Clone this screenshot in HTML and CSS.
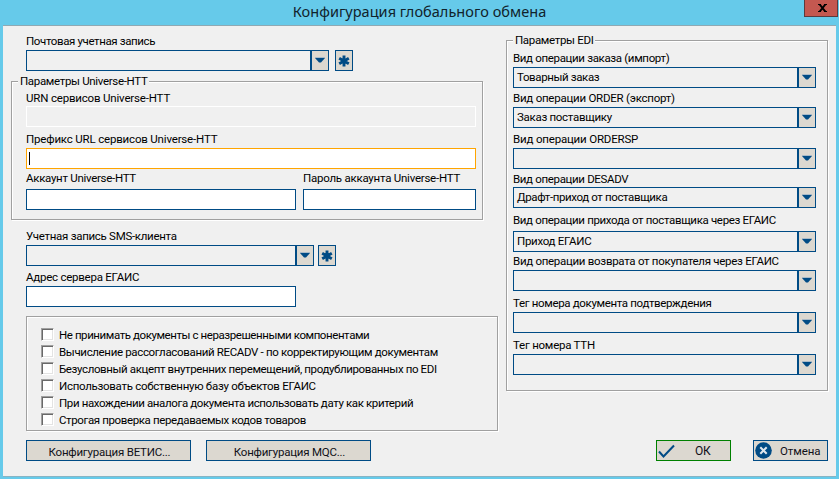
FILE: index.html
```html
<!DOCTYPE html>
<html lang="ru">
<head>
<meta charset="utf-8">
<title>Конфигурация глобального обмена</title>
<link rel="stylesheet" href="styles.css">
</head>
<body>
<svg class="defs" aria-hidden="true">
  <symbol id="arrow" viewBox="0 0 10 6"><path d="M0 .5h10" stroke="#a9bac8"/><path d="M0 1h10L6 5.500H4z" fill="#004b85"/></symbol>
  <symbol id="star" viewBox="0 0 12 12"><path d="M6 .5v11M1.2 3.2l9.6 5.6M10.8 3.2L1.2 8.8" stroke="#004b85" stroke-width="2.9"/></symbol>
</svg>
<div class="window">
  <header class="titlebar">
    <h1>Конфигурация глобального обмена</h1>
    <button class="close"><svg width="9" height="8" viewBox="0 0 9 8"><path d="M0 .5h3M6 .5h3M0 7.500h3M6 7.500h3" stroke="#000"/><path d="M1.700 .5l5.600 7M7.300 .5l-5.600 7" stroke="#000" stroke-width="2"/></svg></button>
  </header>
  <main class="client">
    <section class="left">
      <div class="field mail">
        <label class="t5">Почтовая учетная запись</label>
        <div class="row"><div class="combo"><span></span><b><svg><use href="#arrow"/></svg></b></div><button class="star"><svg><use href="#star"/></svg></button></div>
      </div>
      <div class="group htt">
        <span class="legend">Параметры Universe-HTT</span>
        <div class="field"><label class="t1">URN сервисов Universe-HTT</label><div class="input disabled"></div></div>
        <div class="field prefix"><label class="t1">Префикс URL сервисов Universe-HTT</label><div class="input focus"><i></i></div></div>
        <div class="row creds">
          <div class="field account"><label class="t3">Аккаунт Universe-HTT</label><div class="input"></div></div>
          <div class="field password"><label class="t2">Пароль аккаунта Universe-HTT</label><div class="input"></div></div>
        </div>
      </div>
      <div class="field sms">
        <label class="t3">Учетная запись SMS-клиента</label>
        <div class="row"><div class="combo"><span></span><b><svg><use href="#arrow"/></svg></b></div><button class="star"><svg><use href="#star"/></svg></button></div>
      </div>
      <div class="field server"><label class="t2">Адрес сервера ЕГАИС</label><div class="input"></div></div>
      <div class="group checks">
        <label class="t6"><i></i>Не принимать документы с неразрешенными компонентами</label>
        <label class="t4"><i></i>Вычисление рассогласований RECADV - по корректирующим документам</label>
        <label class="t5"><i></i>Безусловный акцепт внутренних перемещений, продублированных по EDI</label>
        <label class="t3"><i></i>Использовать собственную базу объектов ЕГАИС</label>
        <label class="t5"><i></i>При нахождении аналога документа использовать дату как критерий</label>
        <label class="t5"><i></i>Строгая проверка передаваемых кодов товаров</label>
      </div>
      <div class="row config"><button class="btn wide">Конфигурация ВЕТИС...</button><button class="btn wide">Конфигурация MQC...</button></div>
    </section>
    <section class="right">
      <div class="group edi">
        <span class="legend">Параметры EDI</span>
        <div class="field"><label class="t4">Вид операции заказа (импорт)</label><div class="combo"><span class="t5">Товарный заказ</span><b><svg><use href="#arrow"/></svg></b></div></div>
        <div class="field g3"><label class="t2">Вид операции ORDER (экспорт)</label><div class="combo"><span class="t3">Заказ поставщику</span><b><svg><use href="#arrow"/></svg></b></div></div>
        <div class="field g4"><label class="t1">Вид операции ORDERSP</label><div class="combo"><span></span><b><svg><use href="#arrow"/></svg></b></div></div>
        <div class="field g3 tight"><label class="t4">Вид операции DESADV</label><div class="combo"><span class="t5">Драфт-приход от поставщика</span><b><svg><use href="#arrow"/></svg></b></div></div>
        <div class="field g5 loose"><label class="t4">Вид операции прихода от поставщика через ЕГАИС</label><div class="combo"><span class="t3">Приход ЕГАИС</span><b><svg><use href="#arrow"/></svg></b></div></div>
        <div class="field g2"><label class="t3">Вид операции возврата от покупателя через ЕГАИС</label><div class="combo"><span></span><b><svg><use href="#arrow"/></svg></b></div></div>
        <div class="field g5"><label class="t4">Тег номера документа подтверждения</label><div class="combo"><span></span><b><svg><use href="#arrow"/></svg></b></div></div>
        <div class="field g5"><label class="t2">Тег номера ТТН</label><div class="combo"><span></span><b><svg><use href="#arrow"/></svg></b></div></div>
      </div>
      <div class="row actions">
        <button class="btn ok"><svg width="17" height="14" viewBox="0 0 17 14"><path d="M1 7.500l4.500 5L16 1.500" fill="none" stroke="#004b85" stroke-width="2"/></svg><span>ОК</span></button>
        <button class="btn cancel"><svg width="17" height="17" viewBox="0 0 17 17"><circle cx="8.500" cy="8.500" r="8.300" fill="#004b85"/><path d="M5.300 5.300l6.400 6.400m0-6.400l-6.400 6.400" stroke="#dfe6ec" stroke-width="2"/></svg><span>Отмена</span></button>
      </div>
    </section>
  </main>
</div>
</body>
</html>
```
FILE: styles.css
```css
* { box-sizing: border-box; }
body { margin: 0; background: #66caea; font: 11.5px/14px Roboto, "Liberation Sans", sans-serif; color: #000; overflow: hidden; }
.defs { position: absolute; width: 0; height: 0; }
button { font: inherit; color: inherit; padding: 0; border-radius: 0; }
.window { width: 839px; height: 479px; padding: 0 3px; }
.titlebar { height: 25px; position: relative; }
.titlebar h1 { margin: 0; font: 400 14.5px/22px "Noto Sans", sans-serif; letter-spacing: .04px; text-align: center; color: #10222b; }
.close { position: absolute; right: -2px; top: -1px; width: 34px; height: 18px; background: #c45850; border: 1px solid #5c3a3d; padding-left: 2px; display: flex; align-items: center; justify-content: center; }
.client { display: flex; height: 452px; background: #f0f0f0; border-top: 1px solid #8fa9b3; border-bottom: 1px solid #86b4c4; }
.left { width: 503px; padding: 8px 0 0 8px; }
.right { width: 322px; padding-top: 14px; }
.row { display: flex; }
.field { display: flex; flex-direction: column; gap: 2px; }
label { height: 14px; white-space: nowrap; letter-spacing: -.33px; }
.legend { letter-spacing: -.33px; }
.t1 { letter-spacing: -.18px; }
.t2 { letter-spacing: -.24px; }
.t3 { letter-spacing: -.29px; }
.t4 { letter-spacing: -.34px; }
.t5 { letter-spacing: -.38px; }
.t6 { letter-spacing: -.42px; }
.combo { display: flex; height: 21px; }
.combo span { flex: 1; border: 1px solid #004b85; padding: 2px 0 0 3px; white-space: nowrap; }
.combo b { width: 18px; border: 1px solid #004b85; border-left-color: #004b85; background: #dcd8d0; padding: 6px 0 0 3px; line-height: 0; }
.combo svg { width: 10px; height: 6px; }
.star { width: 18px; height: 21px; border: 1px solid #004b85; background: #dcd8d0; display: flex; align-items: center; justify-content: center; }
.star svg { width: 12px; height: 12px; }
.input { height: 21px; border: 1px solid #004b85; background: #fff; }
.input.disabled { background: #f0f0f0; border-color: #fff; }
.input.focus { border: 1px solid #ffa500; padding: 3px 0 0 2px; }
.input.focus i { display: block; width: 1px; height: 13px; background: #000; }
.group { border: 1px solid #a0a0a0; box-shadow: 1px 1px 0 #fff, inset 1px 1px 0 #fff; }
.legend { display: block; width: max-content; height: 14px; margin: -8px 0 0 6px; padding: 0 2px; background: #f0f0f0; }
.mail { margin-left: 15px; }
.mail .combo { width: 303px; }
.mail .row { gap: 6px; }
.htt { width: 472px; height: 139px; margin-top: 10px; padding-left: 14px; }
.htt > .field { width: 450px; }
.htt .legend { margin-left: -8px; }
.htt .legend + .field { margin-top: 3px; gap: 1px; }
.prefix { margin-top: 5px; }
.creds { gap: 7px; margin-top: 2px; }
.creds .field { gap: 4px; }
.account { width: 270px; }
.password { width: 173px; }
.sms { margin: 9px 0 0 15px; }
.sms .combo { width: 288px; }
.sms .row { gap: 4px; }
.server { width: 270px; margin: 4px 0 0 15px; }
.checks { width: 472px; height: 115px; margin: 9px 0 0 15px; padding: 10px 0 0 14px; }
.checks label { display: flex; height: 17px; line-height: 17px; gap: 5px; }
.checks i { width: 13px; height: 13px; margin-top: 1px; background: #fff; border: 1px solid; border-color: #a0a0a0 #fff #fff #a0a0a0; box-shadow: inset 1px 1px 0 #696969, inset -1px -1px 0 #e3e3e3; }
.config { gap: 15px; margin: 9px 0 0 15px; }
.btn { height: 21px; border: 1px solid #004b85; background: #dcd8d0; display: flex; align-items: center; color: #101018; font: 11.5px/14px Roboto, sans-serif; letter-spacing: -.22px; padding-top: 2px; }
.wide { width: 165px; justify-content: center; padding-left: 2px; }
.edi { width: 322px; height: 351px; padding-left: 6px; }
.edi .legend { margin-left: 0; }
.edi .field { width: 303px; }
.edi .legend + .field { margin-top: 4px; }
.g2 { margin-top: 2px; }
.g3 { margin-top: 3px; }
.g4 { margin-top: 4px; }
.g5 { margin-top: 5px; }
.tight { gap: 1px; }
.loose { gap: 4px; }
.actions { justify-content: flex-end; gap: 22px; margin-top: 49px; }
.ok, .cancel { width: 75px; padding: 0 0 0 1px; }
.ok { border-color: #008000; }
.ok span { margin-left: 20px; padding-top: 1px; letter-spacing: -.3px; font-size: 12px; }
.cancel span { margin-left: 8px; padding-top: 1px; letter-spacing: -.1px; }
```
